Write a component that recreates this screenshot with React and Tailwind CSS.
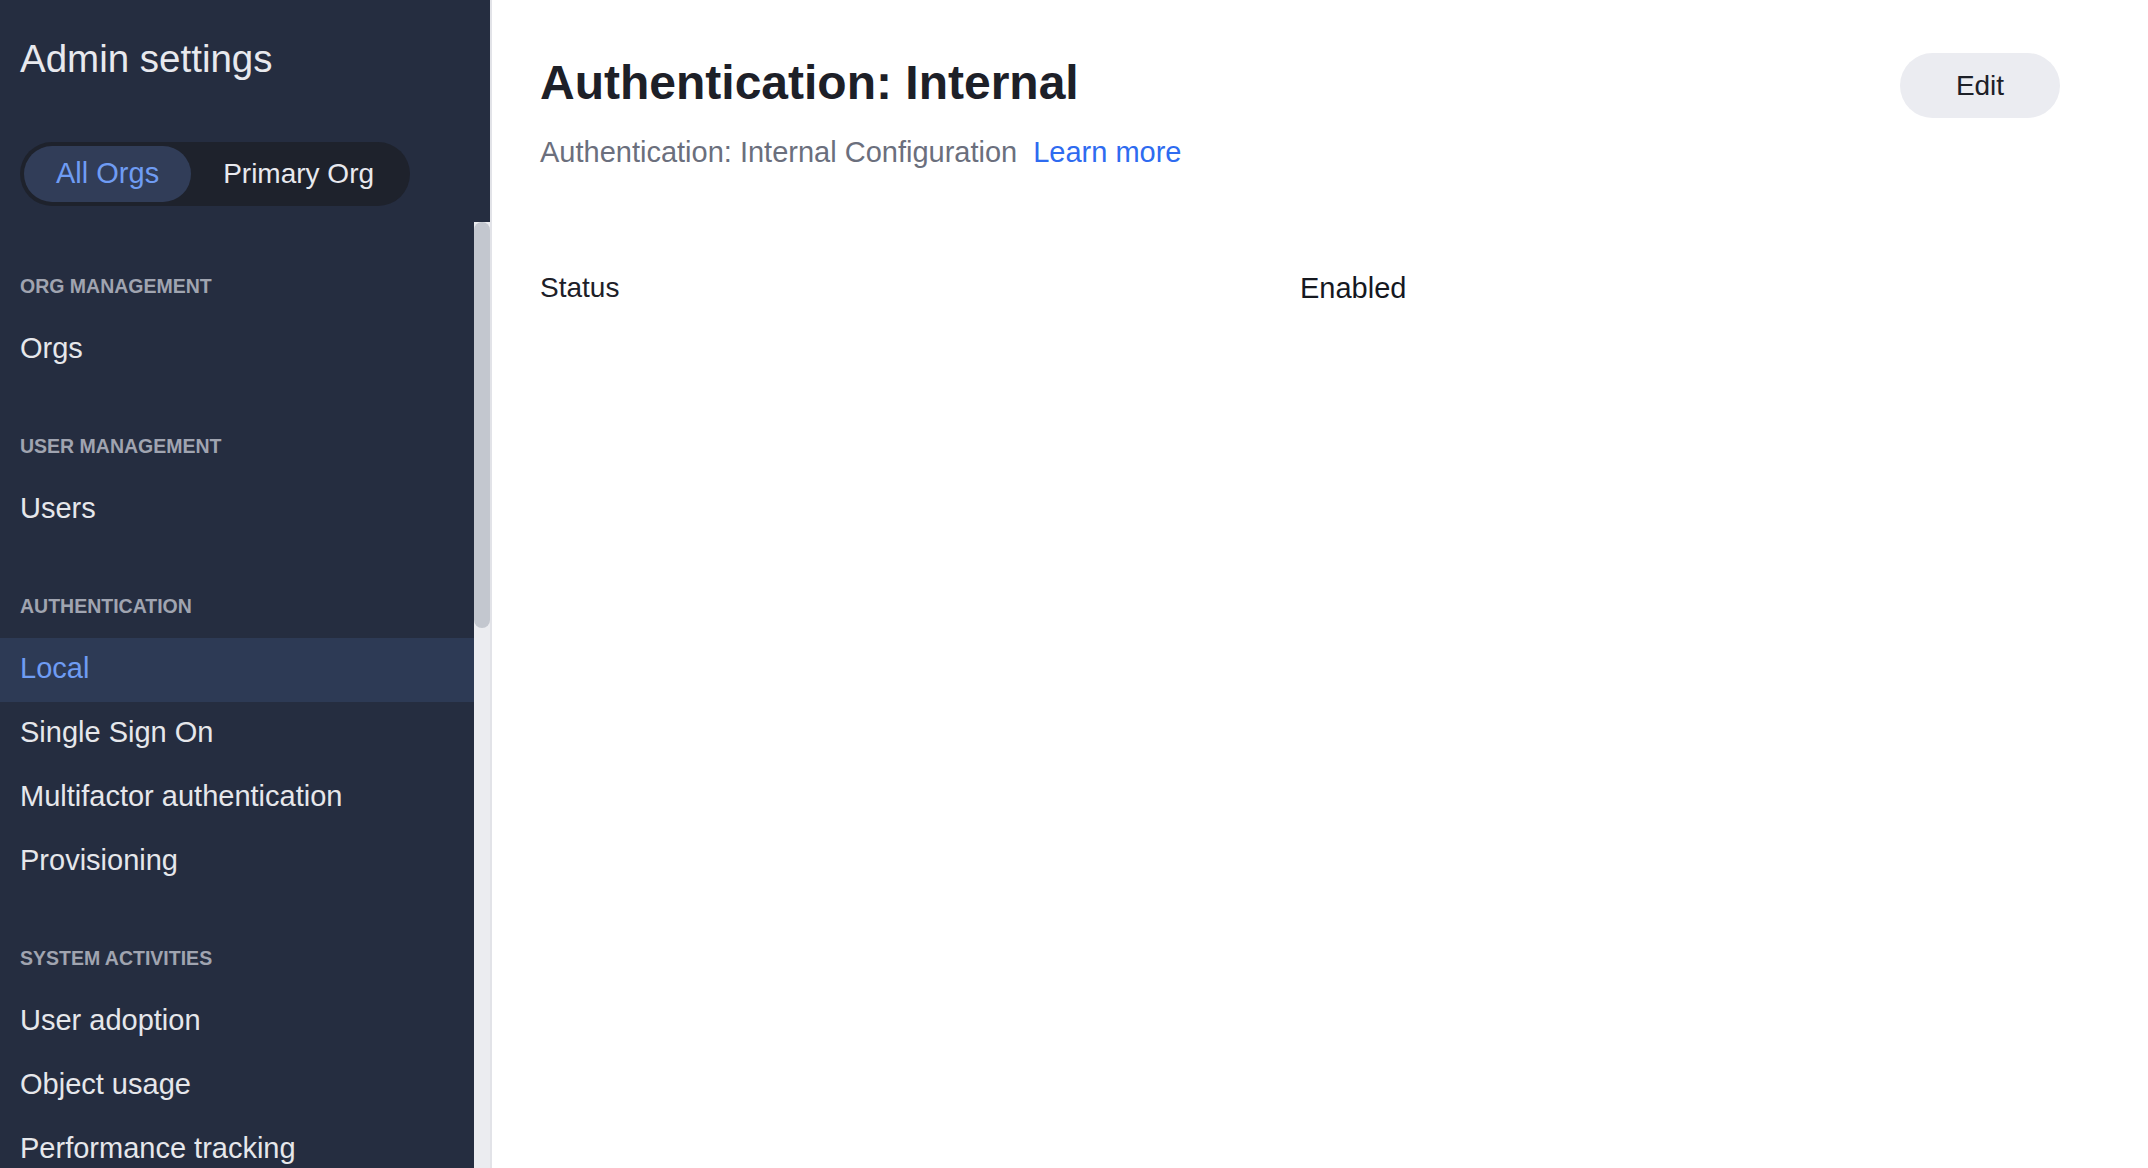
const sections = [
  { title: 'Org management', items: ['Orgs'] },
  { title: 'User management', items: ['Users'] },
  {
    title: 'Authentication',
    items: ['Local', 'Single Sign On', 'Multifactor authentication', 'Provisioning'],
  },
  { title: 'System activities', items: ['User adoption', 'Object usage', 'Performance tracking'] },
];

const active = 'Local';

function Sidebar() {
  return (
    <aside className="flex h-full w-[490px] shrink-0 flex-col bg-[#252d40]">
      <div className="px-5 pt-10">
        <h1 className="text-[38.5px] leading-[38px] text-[#e8e9ee]">Admin settings</h1>
        <div className="mt-16 inline-flex h-16 items-center rounded-full bg-[#1e222c] p-1">
          <button className="h-14 rounded-full bg-[#313d58] px-8 text-[29px] text-[#6f9cf3]">All Orgs</button>
          <button className="h-14 rounded-full px-8 text-[28px] text-[#e8e9ee]">Primary Org</button>
        </div>
      </div>

      <div className="mt-4 flex min-h-0 flex-1">
        <nav className="flex-1 overflow-hidden pt-[54px]">
          {sections.map((s) => (
            <div key={s.title} className="mb-[54px]">
              <div className="mb-[22px] px-5 text-[19.5px] font-bold uppercase leading-[20px] text-[#a0a4b0]">
                {s.title}
              </div>
              {s.items.map((item) => (
                <div
                  key={item}
                  className={`h-16 whitespace-nowrap px-5 text-[29px] leading-[60px] ${
                    item === active ? 'bg-[#2d3a55] text-[#6f9cf3]' : 'text-[#e6e7eb]'
                  }`}
                >
                  {item}
                </div>
              ))}
            </div>
          ))}
        </nav>
        <div className="w-4 shrink-0 bg-[#ebecf0]">
          <div className="h-[406px] rounded-full bg-[#c3c7cf]" />
        </div>
      </div>
    </aside>
  );
}

export default function App() {
  return (
    <div className="flex h-screen overflow-hidden bg-white font-['Liberation_Sans',Arial,sans-serif]">
      <Sidebar />
      <main className="flex-1 border-l-2 border-[#e2e3e8] pl-12 pr-[88px] pt-[53px]">
        <div className="flex items-start justify-between">
          <div>
            <h2 className="mt-[6px] text-[48px] font-bold leading-[48px] text-[#1d2028]">
              Authentication: Internal
            </h2>
            <p className="mt-[31px] text-[29px] leading-[29px] text-[#6b6f7d]">
              Authentication: Internal Configuration
              <a href="#" className="ml-[16px] text-[#2e6bf0]">Learn more</a>
            </p>
          </div>
          <button className="h-[65px] w-40 rounded-full bg-[#ebecf1] text-[28px] text-[#1d2028]">Edit</button>
        </div>

        <div className="mt-[107px] grid grid-cols-2 text-[28px] leading-[28px]">
          <div className="text-[#1d2028]">Status</div>
          <div className="text-[29px] text-[#15181f]">Enabled</div>
        </div>
      </main>
    </div>
  );
}
